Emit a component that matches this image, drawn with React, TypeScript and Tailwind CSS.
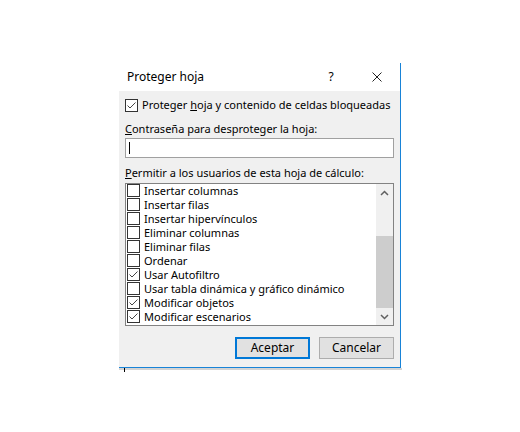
import React from 'react';

const items = [
  { label: 'Insertar columnas', checked: false },
  { label: 'Insertar filas', checked: false },
  { label: 'Insertar hipervínculos', checked: false },
  { label: 'Eliminar columnas', checked: false },
  { label: 'Eliminar filas', checked: false },
  { label: 'Ordenar', checked: false },
  { label: 'Usar Autofiltro', checked: true },
  { label: 'Usar tabla dinámica y gráfico dinámico', checked: false },
  { label: 'Modificar objetos', checked: true },
  { label: 'Modificar escenarios', checked: true },
];

const Box: React.FC<{ checked?: boolean }> = ({ checked }) => (
  <div className="w-[13px] h-[13px] shrink-0 border border-[#333333] bg-white flex items-center justify-center">
    {checked && (
      <svg width="11" height="11" viewBox="0 0 11 11" fill="none">
        <path d="M1.5 5.5 L4 8 L9.5 2.5" stroke="#444" strokeWidth="1" />
      </svg>
    )}
  </div>
);

const Chevron: React.FC<{ up?: boolean }> = ({ up }) => (
  <svg width="9" height="6" viewBox="0 0 9 6" fill="none">
    <path d={up ? 'M1 5 L4.5 1.5 L8 5' : 'M1 1 L4.5 4.5 L8 1'} stroke="#606060" strokeWidth="1.5" />
  </svg>
);

export default function App() {
  return (
    <div className="w-[520px] h-[432px] bg-white overflow-hidden font-['Noto_Sans',sans-serif] text-[11px] text-black">
      <div className="ml-[119px] mt-[63px] w-[283px]">
        <div className="w-[282px] border-r border-b border-[#1883d7]">
          {/* title bar */}
          <div className="h-[28px] bg-white flex items-center pl-[8px] text-[12px]">
            <span className="flex-1 leading-[14px]">Proteger hoja</span>
            <span className="w-[10px] text-center leading-[14px] mr-[36px]">?</span>
            <svg width="10" height="10" viewBox="0 0 10 10" className="mr-[18px]">
              <path d="M0.5 0.5 L9.5 9.5 M9.5 0.5 L0.5 9.5" stroke="#222" strokeWidth="1" />
            </svg>
          </div>
          {/* body */}
          <div className="bg-[#f0f0f0] px-[6px] pt-[7px] pb-[8px]">
            <div className="h-[14px] flex items-center gap-[4px]">
              <Box checked />
              <span className="leading-[14px] whitespace-nowrap">
                Proteger <u>h</u>oja y contenido de celdas bloqueadas
              </span>
            </div>
            <div className="mt-[10px] leading-[14px] h-[14px]">
              <u>C</u>ontraseña para desproteger la hoja:
            </div>
            <div className="mt-[2px] h-[20px] border border-[#a0a0a0] bg-white flex items-center pl-[3px]">
              <div className="w-[1px] h-[12px] bg-black" />
            </div>
            <div className="mt-[8px] leading-[14px] h-[14px]">
              <u>P</u>ermitir a los usuarios de esta hoja de cálculo:
            </div>
            <div className="mt-[3px] h-[143px] border border-[#828282] bg-white flex">
              <div className="flex-1 pl-[1px] overflow-hidden">
                {items.map((it) => (
                  <div key={it.label} className="h-[14px] flex items-start gap-[4px]">
                    <Box checked={it.checked} />
                    <span className="leading-[14px] whitespace-nowrap">{it.label}</span>
                  </div>
                ))}
              </div>
              <div className="w-[17px] bg-[#f0f0f0] flex flex-col">
                <div className="h-[17px] flex items-center justify-center">
                  <Chevron up />
                </div>
                <div className="h-[35px]" />
                <div className="h-[72px] bg-[#cdcdcd]" />
                <div className="flex-1 flex items-center justify-center">
                  <Chevron />
                </div>
              </div>
            </div>
            <div className="mt-[11px] flex justify-end gap-[9px] text-[12px]">
              <button className="w-[75px] h-[22px] border-2 border-[#0078d7] bg-[#e1e1e1] leading-[14px]">
                Aceptar
              </button>
              <button className="w-[75px] h-[22px] border border-[#adadad] bg-[#e1e1e1] leading-[14px]">
                Cancelar
              </button>
            </div>
          </div>
        </div>
        <div className="h-[2px] w-[283px] bg-[#d4d4d4] relative">
          <div className="absolute left-[5px] top-0 w-[1px] h-[4px] bg-black" />
        </div>
      </div>
    </div>
  );
}
